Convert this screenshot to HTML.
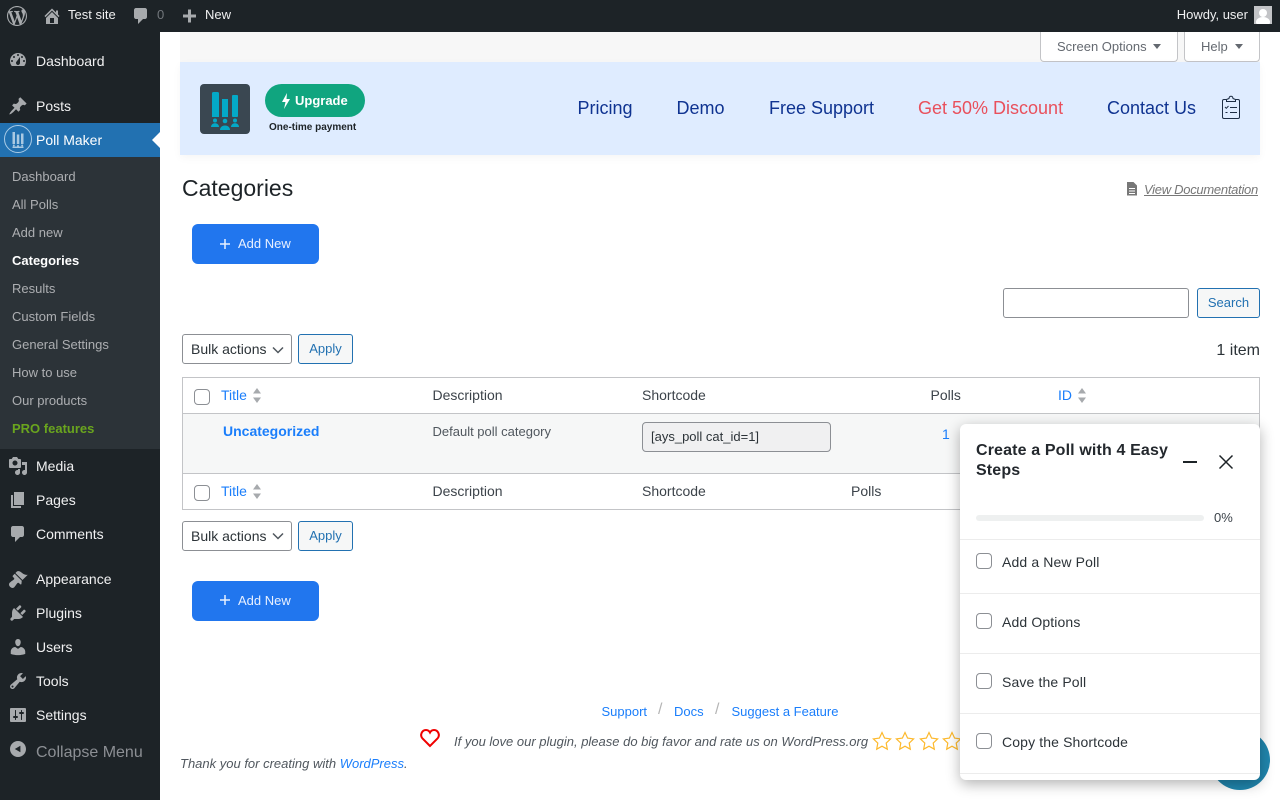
<!DOCTYPE html>
<html lang="en"><head><meta charset="utf-8"><title>Categories</title>
<style>
html,body{margin:0;padding:0;width:1280px;height:800px;overflow:hidden;background:#fff;font-family:"Liberation Sans",sans-serif;color:#3c434a;font-size:14px}
.t{position:absolute;white-space:nowrap;line-height:20px}
.b{position:absolute;box-sizing:border-box}
svg{position:absolute;display:block}
.m{color:#f0f0f1;font-size:14px}
.s{color:#c3c4c7;opacity:.85;font-size:13px;left:12px}
.i{fill:#a7aaad}
.blue{color:#1a7efb}
.btn{border:1px solid #2271b1;color:#2271b1;background:#f6f7f7;border-radius:3px;font-size:13px;text-align:center}
.sel{border:1px solid #8c8f94;border-radius:3px;background:#fff}
.cb{border:1px solid #8c8f94;border-radius:4px;background:#fff;width:16px;height:16px}
.add{background:#2176ee;border-radius:6px;width:127px;height:40px;left:192px}
.nav{font-size:18px;color:#0f3391;line-height:24px}
.row{color:#2c3338;font-size:14px;letter-spacing:.13px}
.div{height:1px;background:#ececec;left:0;width:300px}
</style></head><body>

<!-- sidebar -->
<div class="b" style="left:0;top:0;width:160px;height:800px;background:#1d2327"></div>
<div class="b" style="left:0;top:123px;width:160px;height:34px;background:#2271b1"></div>
<div class="b" style="left:0;top:157px;width:160px;height:292px;background:#2c3338"></div>
<div class="b" style="left:152px;top:132px;border:8px solid transparent;border-right-color:#fff;border-left:0"></div>

<svg class="i" style="left:8px;top:50px" width="20" height="20" viewBox="0 0 20 20"><path d="M3.76 16h12.48c1.1-1.37 1.76-3.11 1.76-5 0-4.42-3.58-8-8-8s-8 3.58-8 8c0 1.89.66 3.63 1.76 5zM10 4c.55 0 1 .45 1 1s-.45 1-1 1-1-.45-1-1 .45-1 1-1zM6 6c.55 0 1 .45 1 1s-.45 1-1 1-1-.45-1-1 .45-1 1-1zm8 0c.55 0 1 .45 1 1s-.45 1-1 1-1-.45-1-1 .45-1 1-1zm-5.37 5.55L12 7v6c0 1.1-.9 2-2 2s-2-.9-2-2c0-.57.24-1.08.63-1.45zM4 10c.55 0 1 .45 1 1s-.45 1-1 1-1-.45-1-1 .45-1 1-1zm12 0c.55 0 1 .45 1 1s-.45 1-1 1-1-.45-1-1 .45-1 1-1z" fill-rule="evenodd"/></svg>
<div class="t m" style="left:36px;top:51px">Dashboard</div>
<svg class="i" style="left:8px;top:96px" width="20" height="20" viewBox="0 0 20 20"><path d="M10.44 3.02l1.82-1.82 6.36 6.35-1.83 1.82c-1.05-.68-2.48-.57-3.41.36l-.75.75c-.92.93-1.04 2.35-.35 3.41l-1.83 1.82-2.41-2.41-2.8 2.79c-.42.42-3.38 2.71-3.8 2.29s1.86-3.39 2.28-3.81l2.79-2.79L4.1 9.36l1.83-1.82c1.05.69 2.48.57 3.4-.36l.75-.75c.93-.92 1.05-2.35.36-3.41z"/></svg>
<div class="t m" style="left:36px;top:96px">Posts</div>
<svg style="left:4px;top:125px" width="28" height="28" viewBox="0 0 28 28"><circle cx="14" cy="14" r="13.5" fill="none" stroke="#a9cbe6" stroke-width="1"/><g fill="#a9c9e2"><rect x="8.500" y="7" width="2.500" height="12"/><rect x="12.800" y="9.500" width="2.500" height="9.500"/><rect x="17" y="8.500" width="2.500" height="10.500"/><circle cx="9.800" cy="20.500" r="1"/><circle cx="14" cy="21" r="1"/><circle cx="18.200" cy="20.500" r="1"/><rect x="8.500" y="21.500" width="11" height="1.500"/></g></svg>
<div class="t" style="left:36px;top:130px;color:#fff">Poll Maker</div>

<div class="t s" style="top:167px">Dashboard</div>
<div class="t s" style="top:195px">All Polls</div>
<div class="t s" style="top:223px">Add new</div>
<div class="t" style="left:12px;top:251px;font-size:13px;font-weight:bold;color:#fff">Categories</div>
<div class="t s" style="top:279px">Results</div>
<div class="t s" style="top:307px">Custom Fields</div>
<div class="t s" style="top:335px">General Settings</div>
<div class="t s" style="top:363px">How to use</div>
<div class="t s" style="top:391px">Our products</div>
<div class="t" style="left:12px;top:419px;font-size:13px;font-weight:bold;color:#6aa51e">PRO features</div>

<svg class="i" style="left:8px;top:456px" width="20" height="20" viewBox="0 0 20 20"><path d="M13 11V4c0-.55-.45-1-1-1h-1.670L9 1H5L3.670 3H2c-.55 0-1 .45-1 1v7c0 .55.45 1 1 1h10c.55 0 1-.45 1-1zM7 4.500c1.380 0 2.500 1.120 2.500 2.500S8.380 9.500 7 9.500 4.500 8.380 4.500 7 5.620 4.500 7 4.500zM14 6h5v10.500c0 1.380-1.120 2.500-2.500 2.500S14 17.880 14 16.500s1.120-2.500 2.500-2.500c.17 0 .34.020.5.050V9h-3V6zm-4 8.050V13h2v3.500c0 1.380-1.120 2.500-2.500 2.500S7 17.880 7 16.500 8.120 14 9.500 14c.17 0 .34.020.5.050z"/></svg>
<div class="t m" style="left:36px;top:456px">Media</div>
<svg class="i" style="left:8px;top:490px" width="20" height="20" viewBox="0 0 20 20"><path d="M6 15V2h10v13H6zm-1 1h8v2H3V5h2v11z"/></svg>
<div class="t m" style="left:36px;top:490px">Pages</div>
<svg class="i" style="left:8px;top:524px" width="20" height="20" viewBox="0 0 20 20"><path d="M5 2h9c1.100 0 2 .9 2 2v7c0 1.100-.9 2-2 2h-2l-5 5v-5H5c-1.100 0-2-.9-2-2V4c0-1.100.9-2 2-2z"/></svg>
<div class="t m" style="left:36px;top:524px">Comments</div>
<svg class="i" style="left:8px;top:569px" width="20" height="20" viewBox="0 0 20 20"><path d="M14.480 11.060L7.410 3.990l1.500-1.500c.5-.56 2.300-.47 3.510.32 1.210.8 1.430 1.280 2.910 2.100 1.180.64 2.450 1.260 4.450.85zm-.71.71L6.700 4.700 4.930 6.470c-.39.39-.39 1.020 0 1.410l1.060 1.060c.39.39.39 1.030 0 1.420-.6.6-1.430 1.110-2.210 1.690-.35.26-.7.53-1.010.84C1.430 13.710 1 14.650 1 15.540 1 17.150 2.850 19 4.460 19c.89 0 1.830-.43 2.530-1.770.31-.31.58-.66.84-1.010.58-.78 1.090-1.610 1.690-2.210.39-.39 1.030-.39 1.420 0l1.060 1.060c.39.39 1.020.39 1.410 0z"/></svg>
<div class="t m" style="left:36px;top:569px">Appearance</div>
<svg class="i" style="left:8px;top:603px" width="20" height="20" viewBox="0 0 20 20"><path d="M13.110 4.360L9.870 7.600 8 5.730l3.240-3.240c.35-.34 1.050-.2 1.560.32.52.51.66 1.210.31 1.550zm-8 1.770l.91-1.120 9.010 9.010-1.190.84c-.71.71-2.630 1.160-3.820 1.160H6.140L4.900 17.260c-.59.59-1.540.59-2.120 0-.59-.58-.59-1.530 0-2.120l1.240-1.240v-3.880c0-1.130.4-3.190 1.090-3.890zm7.260 3.970l3.240-3.240c.34-.35 1.040-.21 1.550.31.52.51.66 1.210.31 1.550l-3.240 3.250z"/></svg>
<div class="t m" style="left:36px;top:603px">Plugins</div>
<svg class="i" style="left:8px;top:637px" width="20" height="20" viewBox="0 0 20 20"><path d="M10 9.250c-2.270 0-2.730-3.440-2.730-3.440C7 4.020 7.820 2 9.970 2c2.160 0 2.980 2.020 2.710 3.810 0 0-.41 3.440-2.680 3.440zm0 2.570L12.720 10c2.390 0 4.520 2.330 4.520 4.530v2.490s-3.650 1.130-7.240 1.130c-3.650 0-7.240-1.130-7.240-1.130v-2.490c0-2.250 1.940-4.480 4.470-4.480z"/></svg>
<div class="t m" style="left:36px;top:637px">Users</div>
<svg class="i" style="left:8px;top:671px" width="20" height="20" viewBox="0 0 20 20"><path d="M16.680 9.770c-1.340 1.340-3.300 1.670-4.950.99l-5.410 6.520c-.99.99-2.590.99-3.580 0s-.99-2.590 0-3.570l6.520-5.420c-.68-1.650-.35-3.610.99-4.950 1.280-1.280 3.120-1.620 4.720-1.060l-2.890 2.890 2.820 2.820 2.860-2.870c.53 1.580.18 3.390-1.080 4.650zM3.810 16.210c.4.39 1.040.39 1.430 0 .4-.4.4-1.040 0-1.430-.39-.4-1.030-.4-1.430 0-.39.39-.39 1.030 0 1.430z"/></svg>
<div class="t m" style="left:36px;top:671px">Tools</div>
<svg class="i" style="left:8px;top:705px" width="20" height="20" viewBox="0 0 20 20"><path d="M18 16V4c0-.55-.45-1-1-1H3c-.55 0-1 .45-1 1v12c0 .55.45 1 1 1h14c.55 0 1-.45 1-1zM8 11h1c.55 0 1 .45 1 1s-.45 1-1 1H8v1.500c0 .28-.22.5-.5.5s-.5-.22-.5-.5V13H6c-.55 0-1-.45-1-1s.45-1 1-1h1V5.500c0-.28.22-.5.5-.5s.5.22.5.5V11zm5-2h-1c-.55 0-1-.45-1-1s.45-1 1-1h1V5.500c0-.28.22-.5.5-.5s.5.22.5.5V7h1c.55 0 1 .45 1 1s-.45 1-1 1h-1v5.500c0 .28-.22.5-.5.5s-.5-.22-.5-.5V9z"/></svg>
<div class="t m" style="left:36px;top:705px">Settings</div>
<svg class="i" style="left:10px;top:741px" width="16" height="16" viewBox="0 0 20 20"><path d="M10 20C4.500 20 0 15.500 0 10S4.500 0 10 0s10 4.500 10 10-4.500 10-10 10zm3-14l-7 4 7 4V6z"/></svg>
<div class="t" style="left:36px;top:742px;font-size:16px;line-height:22px;color:#8c8f94">Collapse Menu</div>

<!-- admin bar -->
<div class="b" style="left:0;top:0;width:1280px;height:32px;background:#1d2327"></div>
<svg class="i" style="left:7px;top:6px" width="20" height="20" viewBox="0 0 20 20"><path fill-rule="evenodd" d="M20 10c0-5.510-4.490-10-10-10C4.480 0 0 4.490 0 10c0 5.520 4.480 10 10 10 5.510 0 10-4.480 10-10zM7.780 15.370L4.370 6.220c.55-.02 1.170-.08 1.170-.08.5-.06.44-1.130-.06-1.110 0 0-1.450.11-2.370.11-.18 0-.37 0-.58-.01C4.120 2.690 6.870 1.110 10 1.110c2.330 0 4.450.87 6.050 2.340-.68-.11-1.650.39-1.650 1.580 0 .74.45 1.360.9 2.100.35.61.55 1.360.55 2.460 0 1.490-1.400 5-1.400 5l-3.030-8.370c.54-.02.82-.17.82-.17.5-.05.44-1.250-.06-1.220 0 0-1.440.12-2.380.12-.87 0-2.330-.12-2.330-.12-.5-.03-.56 1.200-.06 1.220l.92.080 1.260 3.410zM17.410 10c.24-.64.74-1.870.43-4.250.7 1.290 1.050 2.710 1.050 4.250 0 3.290-1.730 6.240-4.400 7.780.97-2.590 1.940-5.200 2.920-7.780zM6.100 18.090C3.120 16.650 1.110 13.530 1.110 10c0-1.300.23-2.480.72-3.590C3.250 10.300 4.670 14.200 6.100 18.090zm4.030-6.630l2.580 6.980c-.86.29-1.760.45-2.710.45-.79 0-1.570-.11-2.290-.33.81-2.380 1.620-4.740 2.420-7.100z"/></svg>
<svg class="i" style="left:42px;top:6px" width="20" height="20" viewBox="0 0 20 20"><path d="M16 8.500l1.530 1.530-1.060 1.060L10 4.620l-6.470 6.470-1.060-1.060L10 2.500l4 4v-2h2v4zm-6-2.460l6 5.990V18H4v-5.970zM12 17v-5H8v5h4z"/></svg>
<div class="t" style="left:68px;top:5px;font-size:13px;color:#f0f0f1">Test site</div>
<svg class="i" style="left:131px;top:6px" width="20" height="20" viewBox="0 0 20 20"><path d="M5 2h9c1.100 0 2 .9 2 2v7c0 1.100-.9 2-2 2h-2l-5 5v-5H5c-1.100 0-2-.9-2-2V4c0-1.100.9-2 2-2z"/></svg>
<div class="t" style="left:157px;top:5px;font-size:13px;color:#72777c">0</div>
<svg class="i" style="left:179px;top:5.500px" width="20" height="20" viewBox="0 0 20 20"><path d="M17 7v3h-5v5H9v-5H4V7h5V2h3v5h5z" transform="translate(0 1.500)"/></svg>
<div class="t" style="left:205px;top:5px;font-size:13px;color:#f0f0f1">New</div>
<div class="t" style="right:32px;top:5px;font-size:13px;color:#f0f0f1">Howdy, user</div>
<div class="b" style="left:1254px;top:6px;width:18px;height:18px;background:#c3c4c7;overflow:hidden"><div class="b" style="left:5px;top:3px;width:8px;height:8px;border-radius:50%;background:#fff"></div><div class="b" style="left:2px;top:11px;width:14px;height:10px;border-radius:50%;background:#fff"></div></div>

<!-- top area -->
<div class="b" style="left:180px;top:32px;width:1080px;height:30px;background:#f7f7f7"></div>
<div class="b" style="left:1040px;top:32px;width:138px;height:30px;background:#fff;border:1px solid #c3c4c7;border-top:0;border-radius:0 0 4px 4px"></div>
<div class="t" style="left:1057px;top:36px;font-size:13px;line-height:21px;color:#646970">Screen Options</div>
<div class="b" style="left:1153px;top:44px;border:4.500px solid transparent;border-top:5px solid #646970;border-bottom:0"></div>
<div class="b" style="left:1184px;top:32px;width:76px;height:30px;background:#fff;border:1px solid #c3c4c7;border-top:0;border-radius:0 0 4px 4px"></div>
<div class="t" style="left:1201px;top:36px;font-size:13px;line-height:21px;color:#646970">Help</div>
<div class="b" style="left:1235px;top:44px;border:4.500px solid transparent;border-top:5px solid #646970;border-bottom:0"></div>

<!-- banner -->
<div class="b" style="left:180px;top:62px;width:1080px;height:93px;background:#dfecff;box-shadow:0 3px 8px rgba(0,0,0,.04)"></div>
<svg style="left:200px;top:84px" width="50" height="50" viewBox="0 0 50 50"><rect width="50" height="50" rx="4" fill="#3a4751"/><g fill="#04a9c7"><path d="M12 9.500a1.500 1.500 0 0 1 1.500-1.500h4a1.500 1.500 0 0 1 1.500 1.500V33h-7z"/><rect x="22" y="15" width="6" height="18"/><rect x="32" y="11" width="6" height="22" rx="1"/><circle cx="15" cy="36.500" r="2"/><circle cx="25" cy="37" r="2.300"/><circle cx="35" cy="36.500" r="2"/><path d="M11 43c0-5 8-5 8 0z"/><path d="M20 46c0-6 10-6 10 0z"/><path d="M31 43c0-5 8-5 8 0z"/></g></svg>
<div class="b" style="left:265px;top:84px;width:100px;height:33px;border-radius:17px;background:#10a57f"></div>
<svg style="left:281px;top:92px" width="10" height="18" viewBox="0 0 10 18"><path d="M6 1 1 10H4.500L3 17 9 7H5.500z" fill="#fff"/></svg>
<div class="t" style="left:295px;top:91px;font-size:13px;font-weight:bold;color:#fff">Upgrade</div>
<div class="t" style="left:269px;top:118px;font-size:10px;font-weight:bold;color:#1d2327">One-time payment</div>
<div class="t nav" style="left:577.500px;top:96px">Pricing</div>
<div class="t nav" style="left:676.500px;top:96px">Demo</div>
<div class="t nav" style="left:769px;top:96px">Free Support</div>
<div class="t nav" style="left:918px;top:96px;color:#e9505c">Get 50% Discount</div>
<div class="t nav" style="left:1107px;top:96px">Contact Us</div>
<svg style="left:1221px;top:94px" width="20" height="26" viewBox="0 0 20 26" fill="none" stroke="#1d2d44" stroke-width="1"><path d="M5.500 5.500H3a1.500 1.500 0 0 0-1.500 1.500v16A1.500 1.500 0 0 0 3 24.500h14a1.500 1.500 0 0 0 1.500-1.500V7A1.500 1.500 0 0 0 17 5.500h-2.500"/><path d="M5.500 7.500v-2l2.500-1c.3-3 3.700-3 4 0l2.500 1v2z"/><path d="M4 13l1.300 1.300L7.500 12M9 13.500h7M4.500 18.500h2M9 18.500h7"/></svg>

<!-- heading -->
<div class="t" style="left:182px;top:174px;font-size:23px;line-height:28px;color:#1d2327">Categories</div>
<svg style="left:1125px;top:182px" width="14" height="15" viewBox="0 0 14 15"><path d="M2 0h6.500L12 3.500V13.500H2zM4 6v1h6V6zm0 2.500v1h6v-1zM4 11v1h6v-1z" fill="#777" fill-rule="evenodd"/></svg>
<div class="t" style="left:1144px;top:180px;font-size:13px;font-style:italic;color:#777;text-decoration:underline;letter-spacing:-.28px">View Documentation</div>

<!-- add new -->
<div class="b add" style="top:224px"></div>
<svg style="left:219px;top:238px" width="12" height="12" viewBox="0 0 12 12"><path d="M6 1v10M1 6h10" stroke="#e8f0ff" stroke-width="1.500"/></svg>
<div class="t" style="left:238px;top:234px;font-size:13px;color:#e8f0ff">Add New</div>

<!-- search -->
<div class="b sel" style="left:1003px;top:288px;width:186px;height:30px"></div>
<div class="b btn" style="left:1197px;top:288px;width:63px;height:30px;line-height:28px">Search</div>

<!-- bulk top -->
<div class="b sel" style="left:182px;top:334px;width:110px;height:30px"></div>
<div class="t" style="left:191px;top:339px;color:#2c3338">Bulk actions</div>
<svg style="left:272px;top:346px" width="12" height="8" viewBox="0 0 12 8"><path d="M1 1.500l5 5 5-5" fill="none" stroke="#50575e" stroke-width="1.500"/></svg>
<div class="b btn" style="left:298px;top:334px;width:55px;height:30px;line-height:28px">Apply</div>
<div class="t" style="right:20px;top:341px;font-size:16px;color:#2c3338">1 item</div>

<!-- table -->
<div class="b" style="left:182px;top:377px;width:1078px;height:133px;border:1px solid #c3c4c7;background:#fff"></div>
<div class="b" style="left:183px;top:413px;width:1076px;height:61px;border-top:1px solid #c3c4c7;border-bottom:1px solid #c3c4c7;background:#f6f7f7"></div>
<div class="b cb" style="left:194px;top:389px"></div>
<div class="t blue" style="left:221px;top:385px">Title</div>
<svg style="left:252px;top:388px" width="10" height="15" viewBox="0 0 10 15"><path d="M5 0l4 5.500H1zM5 15l4-5.500H1z" fill="#a7aaad"/></svg>
<div class="t" style="left:432.500px;top:385px">Description</div>
<div class="t" style="left:642px;top:385px">Shortcode</div>
<div class="t" style="left:930.500px;top:385px">Polls</div>
<div class="t blue" style="left:1058px;top:385px">ID</div>
<svg style="left:1077px;top:388px" width="10" height="15" viewBox="0 0 10 15"><path d="M5 0l4 5.500H1zM5 15l4-5.500H1z" fill="#a7aaad"/></svg>

<div class="t blue" style="left:223px;top:421px;font-weight:bold">Uncategorized</div>
<div class="t" style="left:432.500px;top:422px;font-size:13px;color:#50575e">Default poll category</div>
<div class="b" style="left:642px;top:422px;width:189px;height:30px;background:#f0f0f1;border:1px solid #8c8f94;border-radius:4px"></div>
<div class="t" style="left:651px;top:427px;font-size:13px;color:#2c3338">[ays_poll cat_id=1]</div>
<div class="t blue" style="left:942px;top:424px">1</div>

<div class="b cb" style="left:194px;top:485px"></div>
<div class="t blue" style="left:221px;top:481px">Title</div>
<svg style="left:252px;top:484px" width="10" height="15" viewBox="0 0 10 15"><path d="M5 0l4 5.500H1zM5 15l4-5.500H1z" fill="#a7aaad"/></svg>
<div class="t" style="left:432.500px;top:481px">Description</div>
<div class="t" style="left:642px;top:481px">Shortcode</div>
<div class="t" style="left:851px;top:481px">Polls</div>

<!-- bulk bottom -->
<div class="b sel" style="left:182px;top:521px;width:110px;height:30px"></div>
<div class="t" style="left:191px;top:526px;color:#2c3338">Bulk actions</div>
<svg style="left:272px;top:532px" width="12" height="8" viewBox="0 0 12 8"><path d="M1 1.500l5 5 5-5" fill="none" stroke="#50575e" stroke-width="1.500"/></svg>
<div class="b btn" style="left:298px;top:521px;width:55px;height:30px;line-height:28px">Apply</div>

<div class="b add" style="top:581px"></div>
<svg style="left:219px;top:594px" width="12" height="12" viewBox="0 0 12 12"><path d="M6 1v10M1 6h10" stroke="#e8f0ff" stroke-width="1.500"/></svg>
<div class="t" style="left:238px;top:591px;font-size:13px;color:#e8f0ff">Add New</div>

<!-- footer -->
<div class="t blue" style="left:601.500px;top:702px;font-size:13px">Support</div>
<div class="t" style="left:658px;top:700px;font-size:16px;color:#b5b5b5">/</div>
<div class="t blue" style="left:674px;top:702px;font-size:13px">Docs</div>
<div class="t" style="left:715px;top:700px;font-size:16px;color:#b5b5b5">/</div>
<div class="t blue" style="left:731.500px;top:702px;font-size:13px">Suggest a Feature</div>
<svg style="left:419px;top:727px" width="22" height="22" viewBox="0 0 22 22"><path d="M11 19 3.500 11.500C.5 8 3 3 7 3c1.800 0 3.200 1 4 2.500C11.800 4 13.200 3 15 3c4 0 6.500 5 3.500 8.500z" fill="none" stroke="#f00000" stroke-width="2"/></svg>
<div class="t" style="left:454px;top:731px;font-size:13px;line-height:21px;font-style:italic;color:#50575e">If you love our plugin, please do big favor and rate us on WordPress.org</div>
<svg style="left:872px;top:731px" width="92" height="20" viewBox="0 0 92 20" fill="none" stroke="#fdb92c" stroke-width="1.200"><path d="M10 1.500l2.600 5.600 6 .8-4.400 4.200 1.100 6.100L10 15.200l-5.300 3 1.100-6.100L1.400 7.900l6-.8z"/><path transform="translate(23 0)" d="M10 1.500l2.600 5.600 6 .8-4.400 4.200 1.100 6.100L10 15.200l-5.300 3 1.100-6.100L1.400 7.900l6-.8z"/><path transform="translate(47 0)" d="M10 1.500l2.600 5.600 6 .8-4.400 4.200 1.100 6.100L10 15.200l-5.300 3 1.100-6.100L1.400 7.900l6-.8z"/><path transform="translate(70 0)" d="M10 1.500l2.600 5.600 6 .8-4.400 4.200 1.100 6.100L10 15.200l-5.300 3 1.100-6.100L1.400 7.900l6-.8z"/></svg>
<div class="t" style="left:180px;top:754px;font-size:13px;font-style:italic;color:#50575e">Thank you for creating with <span class="blue">WordPress</span>.</div>

<!-- floating circle + panel -->
<div class="b" style="left:1210px;top:730px;width:60px;height:60px;border-radius:50%;background:#2086ae"></div>
<div class="b" style="left:960px;top:424px;width:300px;height:356px;background:#fff;border-radius:6px;box-shadow:0 4px 14px rgba(0,0,0,.3)">
  <div class="t" style="left:16px;top:16px;width:200px;white-space:normal;font-size:16px;font-weight:bold;color:#23282d;letter-spacing:.14px;padding-top:1px">Create a Poll with 4 Easy Steps</div>
  <div class="b" style="left:223px;top:37px;width:14px;height:2px;background:#1d2327"></div>
  <svg style="left:258px;top:30px" width="16" height="16" viewBox="0 0 16 16"><path d="M1.500 1.500l13 13M14.500 1.500l-13 13" stroke="#1d2327" stroke-width="1.500"/></svg>
  <div class="b" style="left:16px;top:91px;width:228px;height:6px;border-radius:3px;background:#eef0f0"></div>
  <div class="t" style="left:254px;top:84px;font-size:13px;color:#3c434a">0%</div>
  <div class="b div" style="top:115px"></div>
  <div class="b cb" style="left:16px;top:129px"></div>
  <div class="t row" style="left:42px;top:128px">Add a New Poll</div>
  <div class="b div" style="top:169px"></div>
  <div class="b cb" style="left:16px;top:189px"></div>
  <div class="t row" style="left:42px;top:188px">Add Options</div>
  <div class="b div" style="top:229px"></div>
  <div class="b cb" style="left:16px;top:249px"></div>
  <div class="t row" style="left:42px;top:248px">Save the Poll</div>
  <div class="b div" style="top:289px"></div>
  <div class="b cb" style="left:16px;top:309px"></div>
  <div class="t row" style="left:42px;top:308px">Copy the Shortcode</div>
  <div class="b div" style="top:349px"></div>
</div>
</body></html>
